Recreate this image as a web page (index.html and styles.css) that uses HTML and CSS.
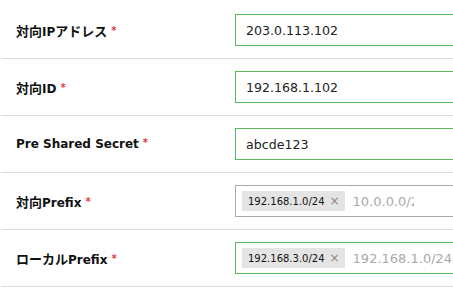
FILE: index.html
```html
<!DOCTYPE html>
<html lang="ja">
<head>
<meta charset="utf-8">
<link rel="stylesheet" href="styles.css">
</head>
<body>
<div class="form">
  <div class="row">
    <label class="label"><span class="ja">対向</span>IP<span class="ja">アドレス</span><span class="req">*</span></label>
    <div class="field"><div class="input valid">203.0.113.102</div></div>
  </div>
  <div class="row">
    <label class="label"><span class="ja">対向</span>ID<span class="req">*</span></label>
    <div class="field"><div class="input valid">192.168.1.102</div></div>
  </div>
  <div class="row">
    <label class="label">Pre Shared Secret<span class="req">*</span></label>
    <div class="field"><div class="input valid">abcde123</div></div>
  </div>
  <div class="row">
    <label class="label"><span class="ja">対向</span>Prefix<span class="req">*</span></label>
    <div class="field"><div class="input tags"><span class="tag">192.168.1.0/24<span class="x">×</span></span><span class="ph short">10.0.0.0/24</span></div></div>
  </div>
  <div class="row">
    <label class="label"><span class="ja">ローカル</span>Prefix<span class="req">*</span></label>
    <div class="field"><div class="input tags valid"><span class="tag">192.168.3.0/24<span class="x">×</span></span><span class="ph">192.168.1.0/24</span></div></div>
  </div>
</div>
</body>
</html>
```
FILE: styles.css
```css
html, body {
  margin: 0;
  padding: 0;
  background: #fff;
  overflow: hidden;
}
body {
  font-family: "DejaVu Sans", "Noto Sans CJK JP", sans-serif;
  color: #222;
}
.form {
  width: 640px;
  padding-top: 2px;
  padding-left: 1px;
}
.row {
  display: grid;
  grid-template-columns: 234px 1fr;
  align-items: center;
  padding: 12px 0;
  border-bottom: 1px solid #ddd;
  height: 32px;
}
.label {
  font-size: 12px;
  font-weight: bold;
  padding-left: 15px;
  color: #111;
  white-space: nowrap;
}
.ja {
  font-family: "Noto Sans CJK JP", sans-serif;
  font-size: 13px;
}
.req {
  color: #e0394a;
  font-size: 10px;
  margin-left: 4px;
  position: relative;
  top: -2px;
}
.input {
  box-sizing: border-box;
  height: 32px;
  border: 1px solid #aaa;
  display: flex;
  align-items: center;
  padding: 0 10px;
  font-size: 12.6px;
  color: #222;
  white-space: nowrap;
  overflow: hidden;
}
.input.valid {
  border-color: #5cb85c;
}
.input.tags {
  padding: 0 6px;
}
.tag {
  background: #e4e4e4;
  height: 20px;
  display: inline-flex;
  align-items: center;
  padding: 0 5px 0 6px;
  font-size: 10px;
  color: #111;
  flex: none;
}
.x {
  color: #888;
  font-size: 12px;
  margin-left: 5px;
}
.ph {
  color: #aaa;
  font-size: 13px;
  margin-left: 8px;
  overflow: hidden;
  flex: none;
}
.ph.short {
  width: 61px;
}
```
